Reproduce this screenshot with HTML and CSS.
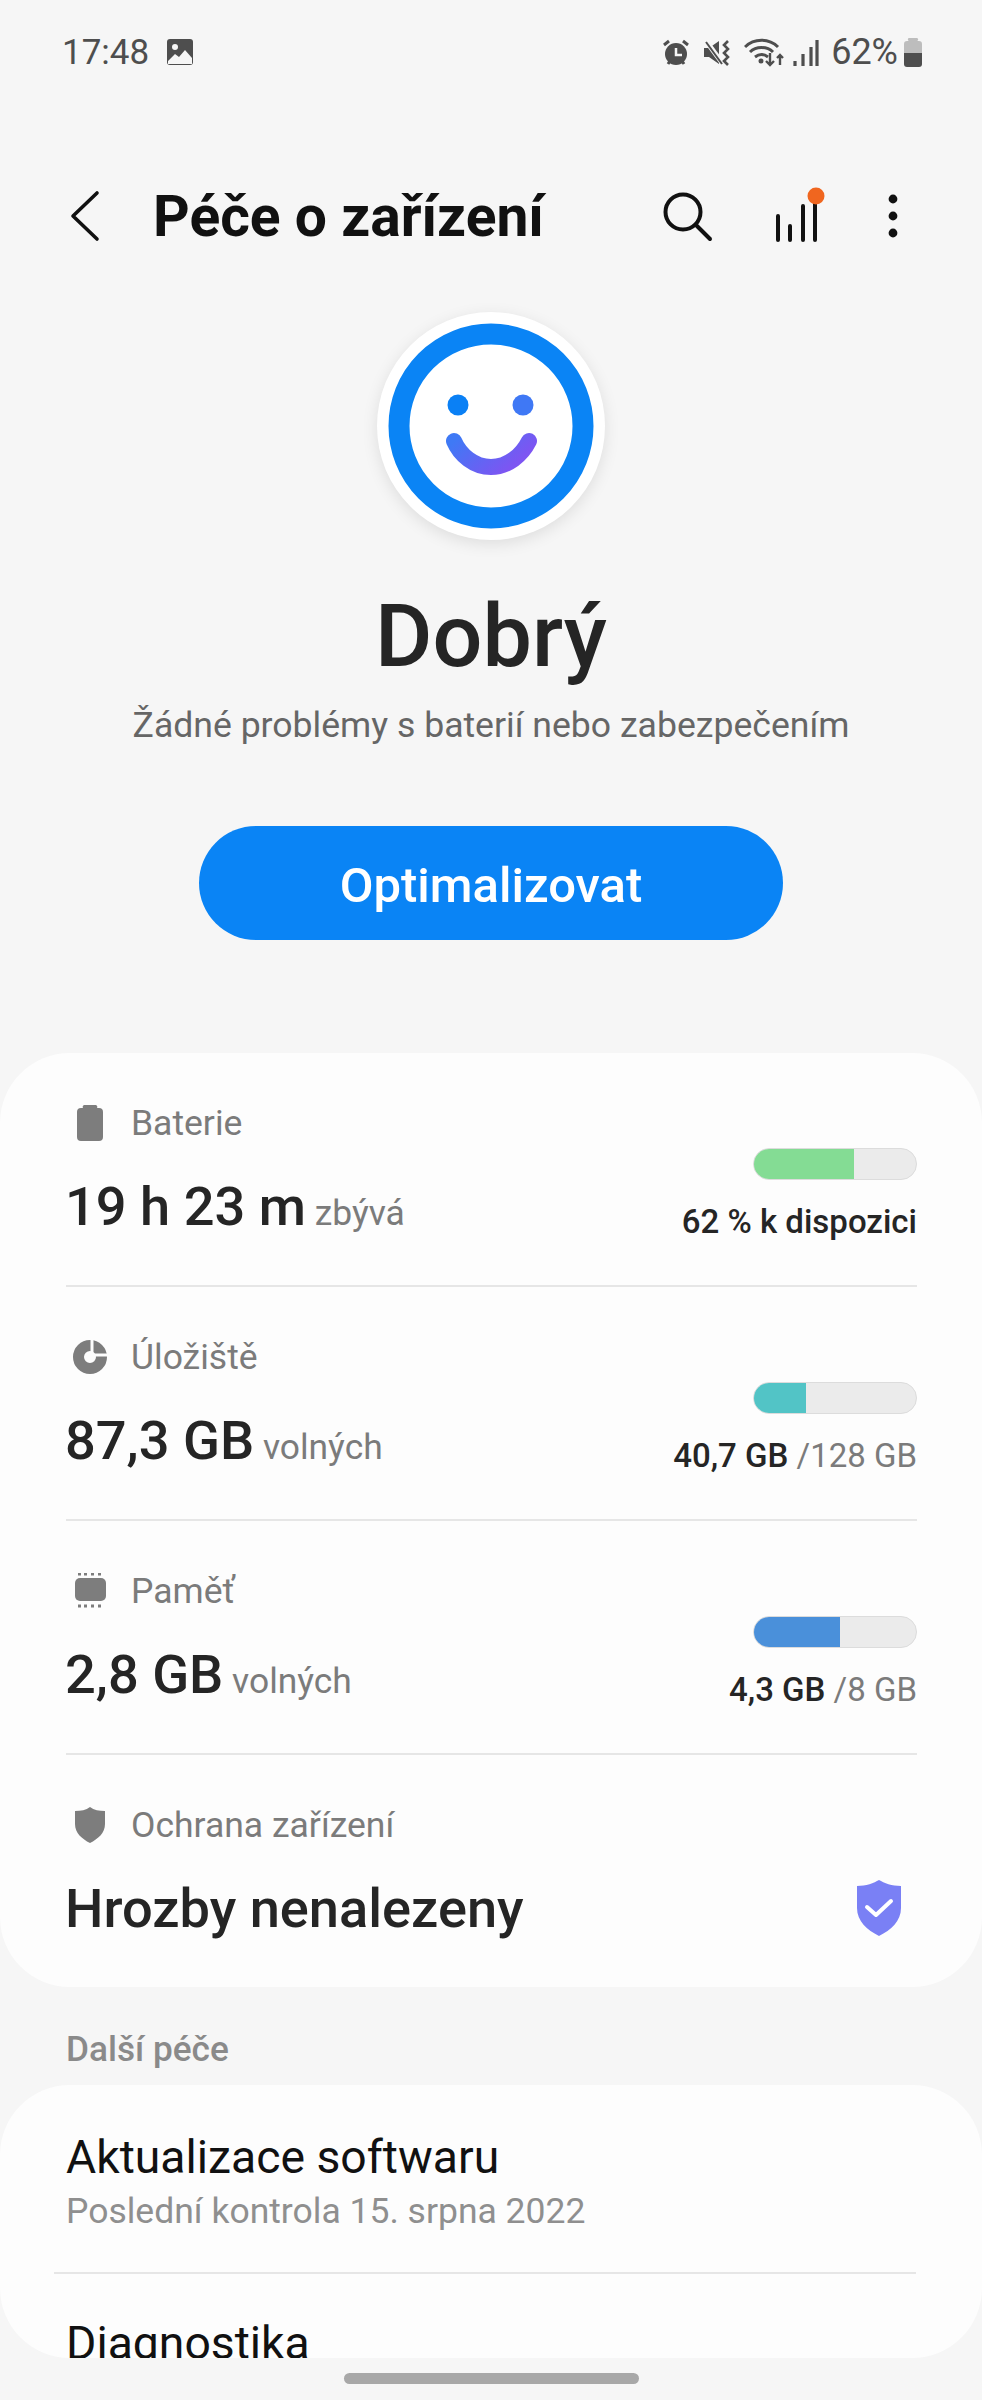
FILE: index.html
```html
<!DOCTYPE html>
<html lang="cs">
<head>
    <meta charset="UTF-8">
    <title>Péče o zařízení</title>
    <link rel="stylesheet" href="styles.css">
</head>
<body>
    <div class="page">
        <div class="status">
            <span class="status-time">17:48</span>
            <svg class="status-pic" width="26" height="26" viewBox="0 0 26 26">
                <rect width="26" height="26" rx="3" fill="#4e4e4e"/>
                <circle cx="8" cy="8" r="3" fill="#f6f6f6"/>
                <path d="M1 22l7-7 4 3 6-7 7 8v6H1z" fill="#f6f6f6"/>
            </svg>
            <div class="spacer"></div>
            <svg width="28" height="27" viewBox="0 0 28 27">
                <circle cx="14" cy="15" r="11" fill="#4e4e4e"/>
                <path d="M14 9v7h6" fill="none" stroke="#f6f6f6" stroke-width="2.5"/>
                <path d="M2 6l5-4M26 6l-5-4" stroke="#4e4e4e" stroke-width="3"/>
                <path d="M6 25l2-3M22 25l-2-3" stroke="#4e4e4e" stroke-width="3"/>
            </svg>
            <svg class="status-mute" width="28" height="27" viewBox="0 0 28 27">
                <path d="M1 9h5l10-7v23L6 18H1z" fill="#4e4e4e"/>
                <path d="M3 2l17 23" stroke="#f6f6f6" stroke-width="5"/>
                <path d="M3 3l16 22" stroke="#4e4e4e" stroke-width="2"/>
                <path d="M25 2l-4 4 4 4-4 4 4 4-4 4 4 4" fill="none" stroke="#4e4e4e" stroke-width="2.6"/>
            </svg>
            <svg class="status-wifi" width="41" height="29" viewBox="0 0 41 29">
                <path d="M1 9c9-9 24-9 33 0M6 14c6-6 17-6 23 0M11 19c4-3 9-3 13 0" fill="none" stroke="#4e4e4e" stroke-width="3"/>
                <circle cx="17" cy="23" r="2.5" fill="#4e4e4e"/>
                <path d="M26 15v12M22 23l4 4 4-4M36 27V17M33 20l3-3 3 3" fill="none" stroke="#4e4e4e" stroke-width="2.4"/>
            </svg>
            <svg class="status-signal" width="26" height="27" viewBox="0 0 26 27">
                <path d="M2 27v-5M10 27V15M18 27V8M24 27V1" stroke="#4e4e4e" stroke-width="3.2"/>
            </svg>
            <span class="status-pct">62%</span>
            <svg class="status-batt" width="18" height="29" viewBox="0 0 18 29">
                <path d="M6 0h6a1 1 0 0 1 1 3h2a3 3 0 0 1 3 3v9H0V6a3 3 0 0 1 3-3h2a1 1 0 0 1 1-3z" fill="#bdbdbd"/>
                <path d="M0 15h18v11a3 3 0 0 1-3 3H3a3 3 0 0 1-3-3z" fill="#4e4e4e"/>
            </svg>
        </div>

        <div class="appbar">
            <svg class="appbar-back" width="30" height="52" viewBox="0 0 30 52">
                <path d="M27 3L3 26l24 23" fill="none" stroke="#111" stroke-width="3.6" stroke-linecap="round" stroke-linejoin="round"/>
            </svg>
            <h1 class="appbar-title">Péče o zařízení</h1>
            <div class="spacer"></div>
            <svg class="appbar-search" width="50" height="50" viewBox="0 0 50 50">
                <circle cx="20" cy="20" r="17.5" fill="none" stroke="#111" stroke-width="4"/>
                <path d="M33 33l14 14" stroke="#111" stroke-width="4" stroke-linecap="round"/>
            </svg>
            <svg class="appbar-bars" width="52" height="60" viewBox="0 0 52 60">
                <path d="M5 32v24M17 42v14M30 22v34M42 16v40" stroke="#111" stroke-width="4" stroke-linecap="round"/>
                <circle cx="43" cy="12" r="8.5" fill="#f0661f"/>
            </svg>
            <svg class="appbar-more" width="10" height="44" viewBox="0 0 10 44">
                <circle cx="5" cy="5" r="4.4" fill="#111"/>
                <circle cx="5" cy="22" r="4.4" fill="#111"/>
                <circle cx="5" cy="39" r="4.4" fill="#111"/>
            </svg>
        </div>

        <div class="summary">
            <div class="face">
                <svg width="206" height="206" viewBox="0 0 206 206">
                    <defs>
                        <linearGradient id="smile" x1="0" y1="0" x2="1" y2="0.4">
                            <stop offset="0" stop-color="#3f79f5"/>
                            <stop offset="1" stop-color="#7d55f2"/>
                        </linearGradient>
                    </defs>
                    <circle cx="103" cy="103" r="92" fill="none" stroke="#0a84f5" stroke-width="21"/>
                    <circle cx="70" cy="82" r="10.5" fill="#0a80f5"/>
                    <circle cx="135" cy="82" r="10.5" fill="#3f78f5"/>
                    <path d="M66 118c6 14 20 26 37 26s31-12 38-26" fill="none" stroke="url(#smile)" stroke-width="16" stroke-linecap="round"/>
                </svg>
            </div>
            <div class="summary-state">Dobrý</div>
            <div class="summary-note">Žádné problémy s baterií nebo zabezpečením</div>
            <button class="optimize" type="button">Optimalizovat</button>
        </div>

        <div class="card">
            <div class="row">
                <div class="row-left">
                    <div class="row-label">
                        <svg class="row-icon" width="48" height="36" viewBox="0 0 48 36">
                            <path d="M19 0h10a2 2 0 0 1 2 3h2a4 4 0 0 1 4 4v25a4 4 0 0 1-4 4H15a4 4 0 0 1-4-4V7a4 4 0 0 1 4-4h2a2 2 0 0 1 2-3z" fill="#7d7d7d"/>
                        </svg>
                        Baterie
                    </div>
                    <div class="row-value"><b>19 h 23 m</b> <span>zbývá</span></div>
                </div>
                <div class="row-right">
                    <div class="bar"><div class="bar-fill fill-green" style="width: 62%"></div></div>
                    <div class="row-usage"><b>62 % k dispozici</b></div>
                </div>
            </div>
            <div class="row">
                <div class="row-left">
                    <div class="row-label">
                        <svg class="row-icon" width="48" height="36" viewBox="0 0 48 36">
                            <circle cx="24" cy="18" r="11.5" fill="none" stroke="#7d7d7d" stroke-width="11"/>
                            <path d="M26 0v16h16" fill="none" stroke="#fdfdfd" stroke-width="3"/>
                        </svg>
                        Úložiště
                    </div>
                    <div class="row-value"><b>87,3 GB</b> <span>volných</span></div>
                </div>
                <div class="row-right">
                    <div class="bar"><div class="bar-fill fill-teal" style="width: 32%"></div></div>
                    <div class="row-usage"><b>40,7 GB</b> /128 GB</div>
                </div>
            </div>
            <div class="row">
                <div class="row-left">
                    <div class="row-label">
                        <svg class="row-icon" width="48" height="36" viewBox="0 0 48 36">
                            <rect x="9" y="5" width="31" height="23" rx="5" fill="#7d7d7d"/>
                            <path d="M12 1h3M18 1h3M25 1h3M32 1h3M12 33h3M18 33h3M25 33h3M32 33h3" stroke="#7d7d7d" stroke-width="3"/>
                        </svg>
                        Paměť
                    </div>
                    <div class="row-value"><b>2,8 GB</b> <span>volných</span></div>
                </div>
                <div class="row-right">
                    <div class="bar"><div class="bar-fill fill-blue" style="width: 53%"></div></div>
                    <div class="row-usage"><b>4,3 GB</b> /8 GB</div>
                </div>
            </div>
            <div class="row">
                <div class="row-left">
                    <div class="row-label">
                        <svg class="row-icon" width="48" height="36" viewBox="0 0 48 36">
                            <path d="M24 0c4 3 9 4 15 4v13c0 9-7 15-15 19C16 32 9 26 9 17V4c6 0 11-1 15-4z" fill="#7d7d7d"/>
                        </svg>
                        Ochrana zařízení
                    </div>
                    <div class="row-value"><b>Hrozby nenalezeny</b></div>
                </div>
                <div class="row-right">
                    <svg class="row-shield" width="46" height="56" viewBox="0 0 46 56">
                        <path d="M23 0c5 3 13 6 22 6v22c0 13-10 22-22 28C11 50 1 41 1 28V6c9 0 17-3 22-6z" fill="#7a80f5"/>
                        <path d="M11 27l9 8 15-14" fill="none" stroke="#fff" stroke-width="4" stroke-linecap="round" stroke-linejoin="round"/>
                    </svg>
                </div>
            </div>
        </div>

        <div class="section-title">Další péče</div>
        <div class="card card-clip">
            <div class="item">
                <div class="item-title">Aktualizace softwaru</div>
                <div class="item-sub">Poslední kontrola 15. srpna 2022</div>
            </div>
            <div class="item">
                <div class="item-title">Diagnostika</div>
            </div>
        </div>
        <div class="home-bar"></div>
    </div>
</body>
</html>
```

FILE: styles.css
```css
* {
    box-sizing: border-box;
}
body {
    margin: 0;
    background-color: #f6f6f6;
    font-family: Roboto, "Liberation Sans", sans-serif;
    color: #252525;
}
.page {
    height: 2400px;
    overflow: hidden;
}
.spacer {
    flex: 1;
}

/* status bar */
.status {
    display: flex;
    align-items: center;
    height: 104px;
    padding: 0 60px 0 62px;
    color: #4e4e4e;
    font-size: 35px;
}
.status-pic {
    margin-left: 18px;
}
.status-mute {
    margin-left: 13px;
}
.status-wifi {
    margin-left: 13px;
}
.status-signal {
    margin-left: 8px;
}
.status-pct {
    margin-left: 12px;
    font-size: 36px;
}
.status-batt {
    margin-left: 6px;
}

/* top bar */
.appbar {
    display: flex;
    align-items: center;
    height: 104px;
    margin-top: 60px;
    padding: 0 84px 0 70px;
}
.appbar-title {
    margin: 0 0 0 53px;
    font-size: 57px;
    font-weight: 700;
    color: #111;
}
.appbar-search {
    margin-top: 2px;
}
.appbar-bars {
    margin: 0 63px 4px 60px;
}

/* score */
.summary {
    display: flex;
    flex-direction: column;
    align-items: center;
    margin-top: 44px;
}
.face {
    display: flex;
    align-items: center;
    justify-content: center;
    width: 228px;
    height: 228px;
    background-color: #fff;
    border-radius: 50%;
    box-shadow: 0 4px 16px rgba(0,0,0,0.1);
}
.summary-state {
    margin-top: 42px;
    font-size: 88px;
    line-height: 108px;
    font-weight: 500;
}
.summary-note {
    margin-top: 13px;
    font-size: 35.6px;
    line-height: 44px;
    color: #666;
}
.optimize {
    width: 584px;
    height: 114px;
    margin-top: 79px;
    padding-top: 6px;
    background-color: #0a84f5;
    color: white;
    border: none;
    border-radius: 57px;
    font-family: inherit;
    font-size: 49px;
    font-weight: 500;
}

/* cards */
.card {
    margin-top: 113px;
    background-color: #fdfdfd;
    border-radius: 70px;
}
.row {
    display: flex;
    justify-content: space-between;
    height: 234px;
    margin: 0 65px 0 66px;
    padding-top: 48px;
    border-bottom: 2px solid #e6e6e6;
}
.row:last-child {
    height: 232px;
    border-bottom: none;
}
.row-label {
    display: flex;
    align-items: center;
    font-size: 35.5px;
    line-height: 44px;
    color: #7b7b7b;
}
.row-icon {
    margin-right: 17px;
}
.row-value {
    margin: 30px 0 0 -1px;
    font-size: 35.4px;
    line-height: 64px;
    color: #7b7b7b;
}
.row-value b {
    font-size: 54.2px;
    font-weight: 500;
    color: #252525;
}
.row-right {
    display: flex;
    flex-direction: column;
    align-items: flex-end;
    padding-top: 47px;
}
.bar {
    width: 164px;
    height: 32px;
    overflow: hidden;
    background-color: #ebebeb;
    border: 1px solid #dcdcdc;
    border-radius: 16px;
}
.bar-fill {
    height: 100%;
}
.fill-green {
    background-color: #84dc94;
}
.fill-teal {
    background-color: #52c4c6;
}
.fill-blue {
    background-color: #4a90da;
}
.row-usage {
    margin-top: 22px;
    font-size: 33px;
    line-height: 40px;
    color: #7b7b7b;
}
.row-usage b {
    font-weight: 500;
    color: #252525;
}
.row-shield {
    margin: 30px 15px 0 0;
}

.section-title {
    margin: 40px 0 14px 66px;
    font-size: 35.2px;
    line-height: 44px;
    font-weight: 500;
    color: #8a8a8a;
}
.card-clip {
    height: 273px;
    margin-top: 0;
    overflow: hidden;
}
.item {
    padding: 46px 66px 0;
}
.item:first-child {
    height: 189px;
    margin-right: 66px;
    margin-left: 54px;
    padding: 46px 0 0 12px;
    border-bottom: 2px solid #e6e6e6;
}
.item:last-child {
    padding-top: 43px;
}
.item-title {
    font-size: 46.3px;
    line-height: 52px;
    color: #111;
}
.item-sub {
    margin-top: 6px;
    font-size: 35.5px;
    line-height: 44px;
    color: #8f8f8f;
}
.home-bar {
    width: 295px;
    height: 11px;
    margin: 15px auto 0;
    background-color: #a8a8a8;
    border-radius: 6px;
}
```
